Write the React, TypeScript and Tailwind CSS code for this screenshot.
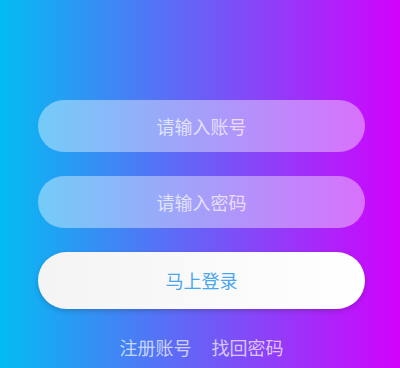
export default function App() {
  return (
    <div
      className="h-[368px] w-full bg-linear-to-r/srgb from-[#03bcf2] to-[#d202fc] pt-[100px] pl-[38px] pr-[35px]"
      style={{ fontFamily: '"Noto Sans CJK SC", "Noto Sans", sans-serif' }}
    >
      <div className="flex flex-col gap-6">
        <input
          className="h-[52px] w-full rounded-full bg-white/40 text-center text-[18px] text-white outline-none placeholder:text-white/70"
          placeholder="请输入账号"
        />
        <input
          type="password"
          className="h-[52px] w-full rounded-full bg-white/40 text-center text-[18px] text-white outline-none placeholder:text-white/70"
          placeholder="请输入密码"
        />
        <button className="h-[57px] w-full rounded-full bg-linear-to-r from-[#f4f4f4] to-white text-[18px] text-[#4aa6ef] shadow-[0_2px_5px_rgba(0,0,0,0.18)]">
          马上登录
        </button>
      </div>

      <div className="mt-[25px] flex justify-center gap-5 text-[18px] text-white/70">
        <span>注册账号</span>
        <span>找回密码</span>
      </div>
    </div>
  );
}
